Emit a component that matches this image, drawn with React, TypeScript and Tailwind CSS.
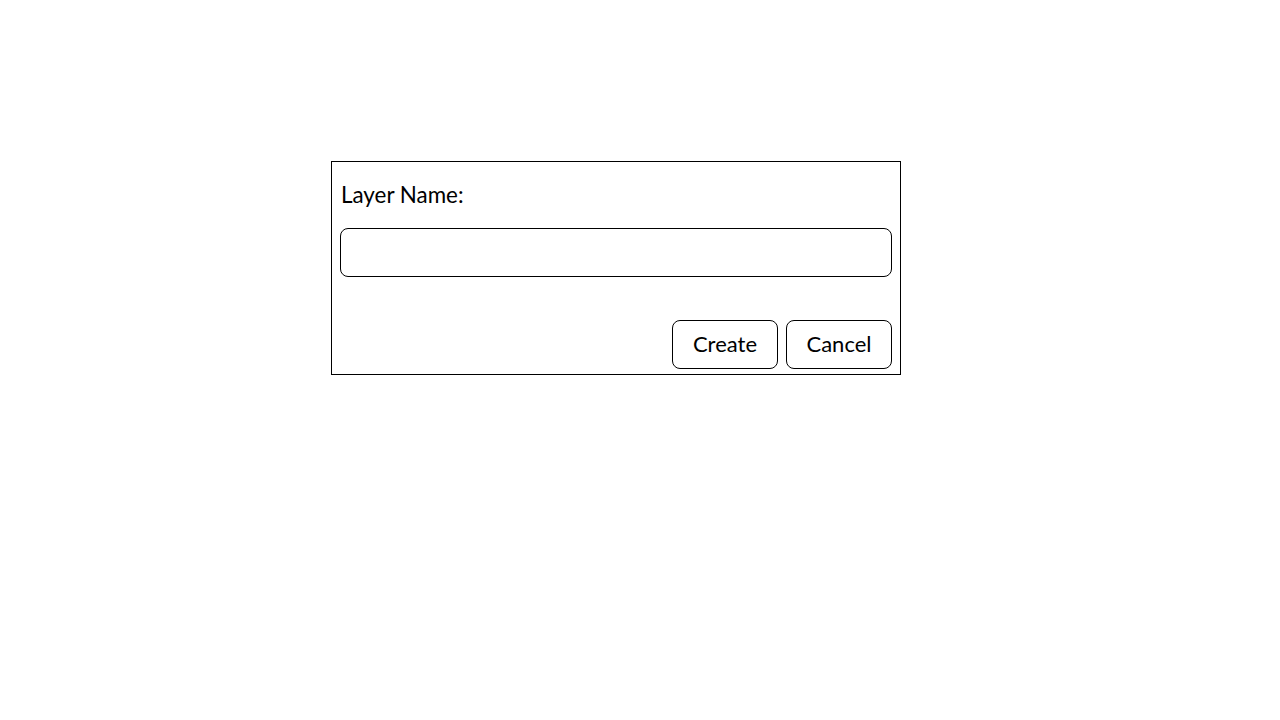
import React from "react";

export default function App() {
  return (
    <div className="min-h-[720px] w-full bg-white" style={{ fontFamily: "Lato, 'Open Sans', sans-serif" }}>
      <div className="pt-[161px] pl-[331px]">
        <div className="flex h-[214px] w-[570px] flex-col border border-black px-[8px] pt-[8px] pb-[5px]">
          <div className="mt-[12px] pl-[1px] text-[22.4px] leading-[26px] text-black">Layer Name:</div>
          <input
            type="text"
            className="mt-[20px] h-[49px] w-full rounded-[8px] border border-black bg-white px-3 text-[20px] outline-none"
          />
          <div className="mt-auto flex justify-end gap-[8px]">
            <button className="flex h-[49px] w-[106px] items-center justify-center rounded-[8px] border border-black bg-white pb-[2px] text-[22px] text-black">
              Create
            </button>
            <button className="flex h-[49px] w-[106px] items-center justify-center rounded-[8px] border border-black bg-white pb-[2px] text-[22px] text-black">
              Cancel
            </button>
          </div>
        </div>
      </div>
    </div>
  );
}
